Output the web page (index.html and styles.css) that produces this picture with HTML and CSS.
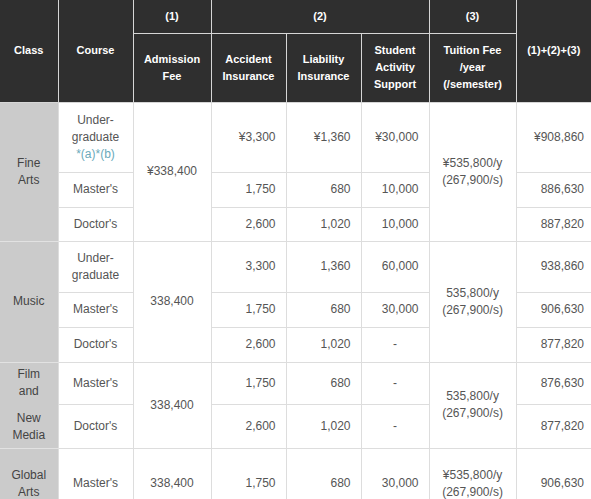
FILE: index.html
```html
<!DOCTYPE html>
<html>
<head>
<meta charset="utf-8">
<link rel="stylesheet" href="styles.css">
</head>
<body>
<table class="fees">
  <colgroup>
    <col class="c-class"><col class="c-course"><col class="c-adm"><col class="c-acc"><col class="c-lia"><col class="c-stu"><col class="c-tui"><col class="c-tot">
  </colgroup>
  <thead>
    <tr class="h33">
      <th rowspan="2">Class</th>
      <th rowspan="2">Course</th>
      <th>(1)</th>
      <th colspan="3">(2)</th>
      <th>(3)</th>
      <th rowspan="2">(1)+(2)+(3)</th>
    </tr>
    <tr class="h69">
      <th>Admission<br>Fee</th>
      <th>Accident<br>Insurance</th>
      <th>Liability<br>Insurance</th>
      <th>Student<br>Activity<br>Support</th>
      <th>Tuition Fee<br>/year<br>(/semester)</th>
    </tr>
  </thead>
  <tbody>
    <tr class="h70">
      <td class="cls" rowspan="3">Fine<br>Arts</td>
      <td class="ctr">Under-<br>graduate<br><span class="note">*(a)*(b)</span></td>
      <td class="ctr" rowspan="3">¥338,400</td>
      <td class="num">¥3,300</td>
      <td class="num">¥1,360</td>
      <td class="num">¥30,000</td>
      <td class="ctr" rowspan="3">¥535,800/y<br>(267,900/s)</td>
      <td class="num">¥908,860</td>
    </tr>
    <tr class="h35">
      <td class="ctr">Master's</td>
      <td class="num">1,750</td>
      <td class="num">680</td>
      <td class="num">10,000</td>
      <td class="num">886,630</td>
    </tr>
    <tr class="h34">
      <td class="ctr">Doctor's</td>
      <td class="num">2,600</td>
      <td class="num">1,020</td>
      <td class="num">10,000</td>
      <td class="num">887,820</td>
    </tr>
    <tr class="h51">
      <td class="cls" rowspan="3">Music</td>
      <td class="ctr">Under-<br>graduate</td>
      <td class="ctr" rowspan="3">338,400</td>
      <td class="num">3,300</td>
      <td class="num">1,360</td>
      <td class="num">60,000</td>
      <td class="ctr" rowspan="3">535,800/y<br>(267,900/s)</td>
      <td class="num">938,860</td>
    </tr>
    <tr class="h35">
      <td class="ctr">Master's</td>
      <td class="num">1,750</td>
      <td class="num">680</td>
      <td class="num">30,000</td>
      <td class="num">906,630</td>
    </tr>
    <tr class="h35">
      <td class="ctr">Doctor's</td>
      <td class="num">2,600</td>
      <td class="num">1,020</td>
      <td class="ctr">-</td>
      <td class="num">877,820</td>
    </tr>
    <tr class="h42">
      <td class="cls" rowspan="2"><div class="blk">Film<br>and</div><div class="blk gap">New<br>Media</div></td>
      <td class="ctr">Master's</td>
      <td class="ctr" rowspan="2">338,400</td>
      <td class="num">1,750</td>
      <td class="num">680</td>
      <td class="ctr">-</td>
      <td class="ctr" rowspan="2">535,800/y<br>(267,900/s)</td>
      <td class="num">876,630</td>
    </tr>
    <tr class="h44">
      <td class="ctr">Doctor's</td>
      <td class="num">2,600</td>
      <td class="num">1,020</td>
      <td class="ctr">-</td>
      <td class="num">877,820</td>
    </tr>
    <tr class="h71">
      <td class="cls">Global<br>Arts</td>
      <td class="ctr">Master's</td>
      <td class="ctr">338,400</td>
      <td class="num">1,750</td>
      <td class="num">680</td>
      <td class="num">30,000</td>
      <td class="ctr">¥535,800/y<br>(267,900/s)</td>
      <td class="num">906,630</td>
    </tr>
  </tbody>
</table>
</body>
</html>
```
FILE: styles.css
```css
html, body {
  margin: 0;
  padding: 0;
  background: #ffffff;
}

.fees {
  width: 591px;
  table-layout: fixed;
  border-collapse: collapse;
  font-family: "Liberation Sans", Arial, sans-serif;
  font-size: 12px;
  line-height: 17px;
  color: #555555;
}

.c-class { width: 58px; }
.c-course { width: 75px; }
.c-adm { width: 78px; }
.c-acc { width: 75px; }
.c-lia { width: 75px; }
.c-stu { width: 68px; }
.c-tui { width: 87px; }
.c-tot { width: 75px; }

.fees th {
  background: #2f2f2f;
  color: #ffffff;
  font-size: 11px;
  font-weight: bold;
  line-height: 17px;
  text-align: center;
  vertical-align: middle;
  padding: 0 2px;
  border: 1px solid #d6d6d6;
  border-top: none;
}

.fees th:first-child { border-left: none; }
.fees thead tr:first-child th:last-child { border-right: none; }

.fees td {
  border: 1px solid #dddddd;
  vertical-align: middle;
  padding: 0 3px;
}

.fees tr td:last-child { border-right: none; }
.fees td.cls {
  border-left: none;
  background: #cbcbcb;
  color: #444444;
  text-align: center;
  border-bottom-color: #e2e2e2;
  border-top-color: #e2e2e2;
}

.ctr { text-align: center; }
.num { text-align: right; padding-right: 10px !important; }
.fees tr td.num:last-child { padding-right: 7px !important; }

.note { color: #6aaabb; }

.blk { display: block; }
.gap { margin-top: 10px; }

.h33 { height: 33px; }
.h69 { height: 69px; }
.h70 { height: 70px; }
.h35 { height: 35px; }
.h34 { height: 34px; }
.h51 { height: 51px; }
.h42 { height: 42px; }
.h44 { height: 44px; }
.h71 { height: 71px; }
```
